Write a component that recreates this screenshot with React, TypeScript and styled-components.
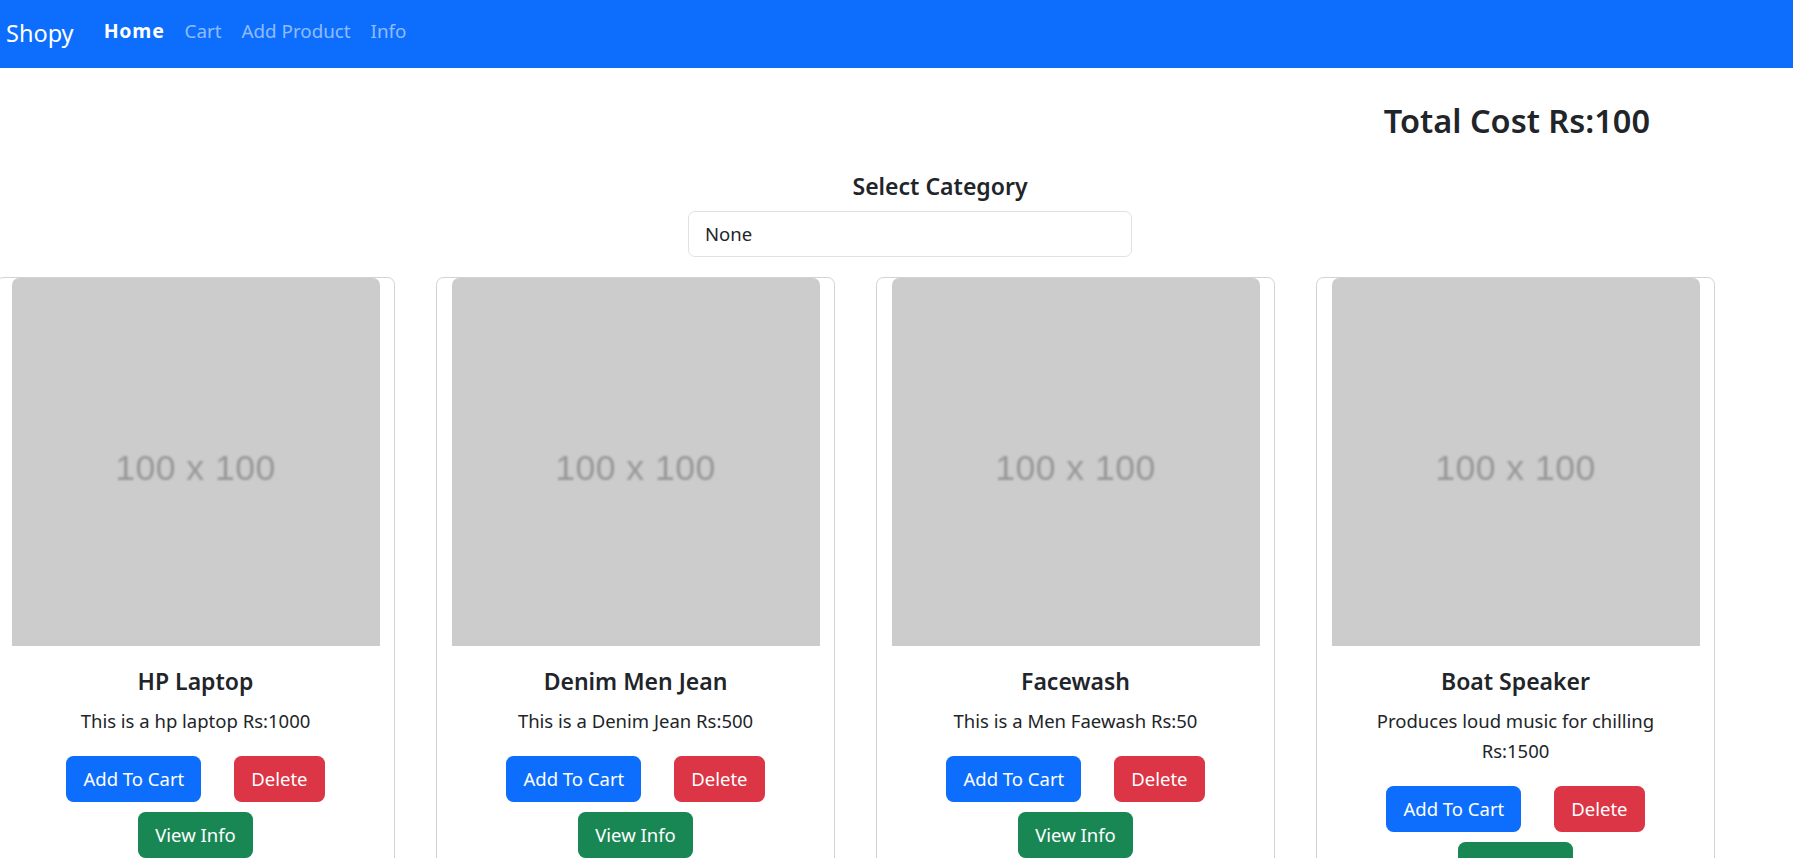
import React from "react";
import styled, { createGlobalStyle } from "styled-components";

const GlobalStyle = createGlobalStyle`
  html, body { margin: 0; padding: 0; background: #fff; }
  body {
    font-family: "Noto Sans", "Open Sans", sans-serif;
    color: #212529;
    font-size: 20px;
    line-height: 1.5;
    overflow: hidden;
  }
  * { box-sizing: border-box; }
`;

const NavBar = styled.nav`
  height: 68px;
  background: #0d6efd;
  display: flex;
  align-items: center;
  padding: 0 6px;
`;

const Brand = styled.a`
  font-size: 23.5px;
  line-height: 1.5;
  color: #fff;
  margin-right: 20px;
  text-decoration: none;
`;

const NavLink = styled.a<{ $active?: boolean }>`
  font-size: ${(p) => (p.$active ? "19.5px" : "18.8px")};
  line-height: 30px;
  padding: 0 10px 6px 10px;
  text-decoration: none;
  color: ${(p) => (p.$active ? "#fff" : "rgba(255,255,255,0.55)")};
  font-weight: ${(p) => (p.$active ? 700 : 400)};
  letter-spacing: ${(p) => (p.$active ? "0.8px" : "0")};
`;

const TotalRow = styled.div`
  display: flex;
  justify-content: flex-end;
  padding-right: 143px;
  margin-top: 33px;
`;

const TotalCost = styled.h3`
  margin: 0;
  font-size: 32.5px;
  font-weight: 600;
  line-height: 1.2;
`;

const FilterWrap = styled.div`
  display: flex;
  justify-content: center;
  padding-left: 27px;
  margin-top: 31px;
`;

const FilterBox = styled.div`
  width: 444px;
  display: flex;
  flex-direction: column;
`;

const FilterTitle = styled.h5`
  margin: 0 0 10px 0;
  padding-left: 60px;
  text-align: center;
  font-size: 23px;
  font-weight: 600;
  line-height: 30px;
`;

const SelectBox = styled.div`
  height: 46px;
  border: 1px solid #dee2e6;
  border-radius: 7px;
  padding: 0 16px;
  display: flex;
  align-items: center;
  font-size: 18.5px;
  color: #212529;
`;

const CardRow = styled.div`
  display: flex;
  gap: 41px;
  margin-left: -4px;
  margin-top: 20px;
`;

const Card = styled.div`
  width: 399px;
  flex: 0 0 399px;
  border: 1px solid rgba(0, 0, 0, 0.175);
  border-radius: 7.5px;
  display: flex;
  flex-direction: column;
  align-items: center;
`;

const Placeholder = styled.div`
  width: 368px;
  height: 368px;
  background: #cccccc;
  border-radius: 7px 7px 0 0;
  display: flex;
  align-items: center;
  justify-content: center;
  padding-top: 14px;
`;

const PlaceholderText = styled.span`
  font-family: "Liberation Sans", Arial, sans-serif;
  font-size: 35.5px;
  color: #979797;
  filter: blur(0.8px);
  letter-spacing: 0.5px;
`;

const CardBody = styled.div`
  padding: 20px;
  width: 100%;
  display: flex;
  flex-direction: column;
  align-items: center;
  text-align: center;
`;

const CardTitle = styled.h5`
  margin: 0 0 10px 0;
  font-size: 23px;
  font-weight: 600;
  line-height: 30px;
`;

const CardText = styled.p`
  margin: 0 0 20px 0;
  max-width: 320px;
  font-size: 18.5px;
  line-height: 30px;
`;

const ButtonRow = styled.div`
  display: flex;
  justify-content: center;
  gap: 33px;
`;

const Button = styled.button<{ $variant: "primary" | "danger" | "success" }>`
  font-family: inherit;
  font-size: 18.5px;
  line-height: 30px;
  padding: 7px 16px;
  border: 1px solid transparent;
  border-radius: 7.5px;
  color: #fff;
  cursor: pointer;
  background: ${(p) =>
    p.$variant === "primary" ? "#0d6efd" : p.$variant === "danger" ? "#dc3545" : "#198754"};
`;

const SecondRow = styled(ButtonRow)`
  margin-top: 10px;
`;

const products = [
  { name: "HP Laptop", desc: "This is a hp laptop", price: 1000 },
  { name: "Denim Men Jean", desc: "This is a Denim Jean", price: 500 },
  { name: "Facewash", desc: "This is a Men Faewash", price: 50 },
  { name: "Boat Speaker", desc: "Produces loud music for chilling", price: 1500 },
];

export default function App() {
  return (
    <>
      <GlobalStyle />
      <NavBar>
        <Brand href="#">Shopy</Brand>
        <NavLink $active href="#">Home</NavLink>
        <NavLink href="#">Cart</NavLink>
        <NavLink href="#">Add Product</NavLink>
        <NavLink href="#">Info</NavLink>
      </NavBar>
      <TotalRow>
        <TotalCost>Total Cost Rs:100</TotalCost>
      </TotalRow>
      <FilterWrap>
        <FilterBox>
          <FilterTitle>Select Category</FilterTitle>
          <SelectBox>None</SelectBox>
        </FilterBox>
      </FilterWrap>
      <CardRow>
        {products.map((p) => (
          <Card key={p.name}>
            <Placeholder>
              <PlaceholderText>100 x 100</PlaceholderText>
            </Placeholder>
            <CardBody>
              <CardTitle>{p.name}</CardTitle>
              <CardText>
                {p.desc} Rs:{p.price}
              </CardText>
              <ButtonRow>
                <Button $variant="primary">Add To Cart</Button>
                <Button $variant="danger">Delete</Button>
              </ButtonRow>
              <SecondRow>
                <Button $variant="success">View Info</Button>
              </SecondRow>
            </CardBody>
          </Card>
        ))}
      </CardRow>
    </>
  );
}
